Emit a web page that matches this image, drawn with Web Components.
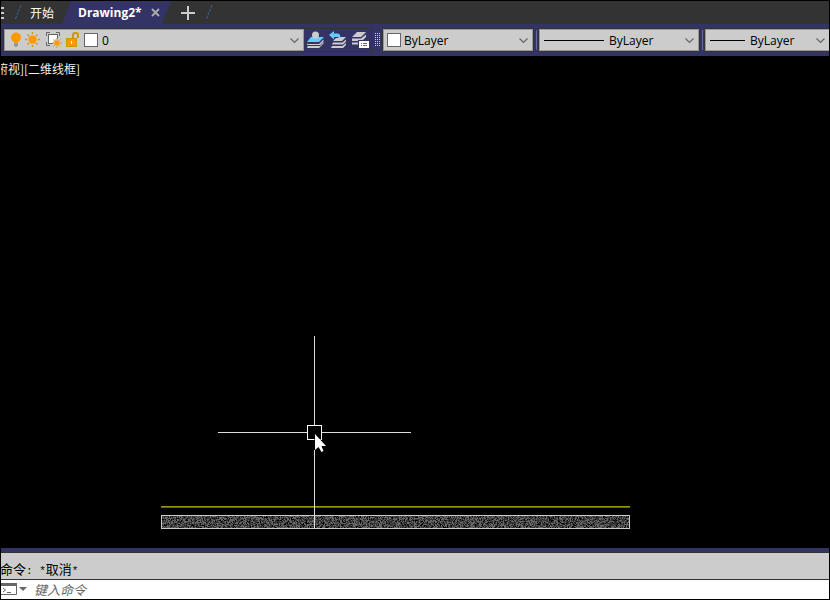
<!DOCTYPE html>
<html lang="zh-CN">
<head>
<meta charset="utf-8">
<title>Drawing2</title>
<style>
body { margin: 0; background: #000; font-family: "Open Sans", "Noto Sans CJK SC", sans-serif; font-size: 12px; }
</style>
</head>
<body>
<cad-app></cad-app>
<script>
const define = (name, html, setup) => {
  const tpl = document.createElement('template');
  tpl.innerHTML = html;
  customElements.define(name, class extends HTMLElement {
    constructor() {
      super();
      this.attachShadow({ mode: 'open' }).append(tpl.content.cloneNode(true));
    }
    connectedCallback() { if (setup) setup(this, this.shadowRoot); }
  });
};

define('tab-divider', `
<style>:host { display: block; width: 8px; height: 17px; } svg { display: block; }</style>
<svg width="8" height="17"><path d="M7 1L1 16" stroke="#336699" stroke-width="1" stroke-dasharray="3 1" fill="none"/></svg>`);

define('file-tabs', `
<style>
:host { display: flex; align-items: center; height: 23px; background: #333; color: #fff; overflow: hidden; }
button { border: 0; padding: 0; background: none; color: inherit; font: inherit; display: flex; align-items: center; }
svg { display: block; }
.menu { width: 4px; margin-right: 9px; }
.start { margin: 0 8px; height: 23px; }
.active { display: flex; align-items: center; box-sizing: border-box; width: 109px; height: 23px; padding-left: 16px; gap: 9px;
  background: #336; clip-path: polygon(9px 0, 100% 0, calc(100% - 9px) 100%, 0 100%); }
.active .name { font-weight: 700; }
.add { margin: 0 9px; }
</style>
<button class="menu" aria-label="菜单"><svg width="4" height="14" fill="#ccc"><path d="M0 1h3v2H0zM0 6h3v2H0zM0 11h3v2H0z"/></svg></button>
<tab-divider></tab-divider>
<button class="start">开始</button>
<div class="active">
  <button class="name">Drawing2*</button>
  <button aria-label="关闭"><svg width="9" height="9"><path d="M1 1l7 7M8 1L1 8" stroke="#aaa" stroke-width="2"/></svg></button>
</div>
<button class="add" aria-label="新建"><svg width="16" height="16"><path d="M8 1v14M1 8h14" stroke="#ccc" stroke-width="2"/></svg></button>
<tab-divider></tab-divider>`);

define('combo-box', `
<style>
:host { display: flex; align-items: center; box-sizing: border-box; height: 22px; border: 1px solid #999; background: #ccc; position: relative; color: #000; }
select { flex: 1; min-width: 0; height: 20px; appearance: none; border: 0; margin: 0; padding: 0 18px 0 var(--text-gap, 5px); background: transparent; color: inherit; font: inherit; border-radius: 0; }
.arrow { position: absolute; right: 4px; top: 8px; pointer-events: none; }
</style>
<slot></slot>
<select><option></option></select>
<svg class="arrow" width="9" height="6"><path d="M.5 .5l4 4l4-4" stroke="#666" stroke-width="1.2" fill="none"/></svg>`,
(host, root) => {
  root.querySelector('option').textContent = host.getAttribute('value');
  root.querySelector('select').setAttribute('aria-label', host.getAttribute('label'));
});

define('color-swatch', `
<style>:host { display: block; box-sizing: border-box; width: 14px; height: 14px; border: 1px solid #666; background: #fff; }</style>`);

define('line-sample', `
<style>:host { display: block; height: 1px; background: #000; }</style>`);

define('layer-states', `
<style>
:host { display: flex; align-items: center; }
button { border: 0; padding: 0; background: none; }
svg { display: block; }
</style>
<button aria-label="开/关图层"><svg width="17" height="18"><circle cx="8" cy="6.500" r="5" fill="#f90"/><path d="M6 10h4v2H6z" fill="#f90"/><path d="M6 12h4v3H9v1H7v-1H6z" fill="#999"/></svg></button>
<button aria-label="冻结"><svg width="17" height="18"><circle cx="7.5" cy="8.5" r="4.2" fill="#f90"/><path d="M7.5 1v2M7.5 14v2M0 8.5h2M13 8.5h2M2.5 3.5l1.500 1.500M11 12l1.500 1.500M12.500 3.500L11 5M4 12l-1.500 1.500" stroke="#c90" stroke-width="1.3"/></svg></button>
<button aria-label="视口冻结"><svg width="20" height="18"><rect x="6.500" y="3.500" width="9" height="9" fill="#fff" stroke="#666"/><path d="M4.500 5V1.500H8M14 1.500h3.500V5M4.500 11v3.500H8" stroke="#666" fill="none"/><circle cx="15" cy="12" r="4" fill="#ccc"/><circle cx="15" cy="12" r="2.700" fill="#f90"/><path d="M15 7v1.500M15 15.500V17M10 12h1.500M18.500 12H20M11.500 8.500l1 1M17.500 14.500l1 1M18.500 8.500l-1 1M12.500 14.500l-1 1" stroke="#c90"/></svg></button>
<button aria-label="锁定"><svg width="24" height="18"><path d="M11 8V4q0-2 2-2h1q2 0 2 2V7" fill="none" stroke="#c90" stroke-width="2"/><path d="M4 7h11v9H4z" fill="#c90"/><path d="M5 8h9v7H5z" fill="#f90"/><path d="M9 10h1v3H9z" fill="#fff"/></svg></button>`);

define('layer-tools', `
<style>
:host { display: flex; align-items: center; gap: 5px; padding: 0 1px 0 2px; }
button { border: 0; padding: 0; background: none; }
svg { display: block; }
</style>
<button aria-label="置为当前"><svg width="18" height="18"><path d="M5 6h13l-5 5H1z" fill="#6cf"/><path d="M2 11.500L1 13h12l4.500-4.500v2L14 14H1zM2 14.500L1 17h12l4.500-4.500v-1.500L14 15H2z" fill="#ccc"/><circle cx="9.500" cy="4" r="3.500" fill="#ccc"/></svg></button>
<button aria-label="上一个图层"><svg width="18" height="18"><path d="M10 6h7l-4 4H4l3-3h3z" fill="#ccc"/><path d="M4 11.500h9.500L17 8.500v2L14 13.500H3zM3 15h10.500l3.500-3v2L14 17H2z" fill="#ccc"/><path d="M0 4l5-4v2.500h3.500q3 0 3 5L8.500 6H5v2.500z" fill="#6cf"/></svg></button>
<button aria-label="图层特性"><svg width="18" height="18"><path d="M5 1h9l-5 5H0zM0 7.500h9L14 3.500v2.500L10 10H0zM0 11.500h7v2H0z" fill="#ccc"/><rect x="6" y="9" width="11" height="8" fill="#336"/><path d="M7 10h10v7H7z" fill="#fff"/><path d="M9 12.500h1M11 12.500h4M9 14.500h1M11 14.500h4" stroke="#666"/></svg></button>`);

define('tool-ribbon', `
<style>
:host { display: flex; padding: 4px 0 4px 2px; background: #336; overflow: hidden; }
.panel { display: flex; border: 1px solid #333; flex: none; }
.layers { width: 300px; --text-gap: 4px; }
.color { width: 150px; --text-gap: 3px; }
.linetype { width: 160px; }
.last { flex: 1 1 90px; min-width: 90px; border-right: 0; }
.last combo-box { flex: 1; border-right: 0; }
.grip { width: 5px; margin: 5px 2px 5px 3px; background: conic-gradient(from 270deg at 1px 1px, #ccd 90deg, transparent 0) 0 0 / 2px 2px; }
.bar { width: 1px; margin: 2px 1px 2px 2px; background: #669; }
.layers layer-states { padding-left: 3px; }
.layers color-swatch { margin-left: -2px; }
.color color-swatch { margin-left: 3px; }
.linetype line-sample { width: 60px; margin-left: 4px; }
.last line-sample { width: 35px; margin-left: 4px; }
</style>
<div class="panel">
  <combo-box class="layers" label="图层" value="0"><layer-states></layer-states><color-swatch></color-swatch></combo-box>
  <layer-tools></layer-tools>
</div>
<div class="grip"></div>
<div class="panel"><combo-box class="color" label="颜色" value="ByLayer"><color-swatch></color-swatch></combo-box></div>
<div class="bar"></div>
<div class="panel"><combo-box class="linetype" label="线型" value="ByLayer"><line-sample></line-sample></combo-box></div>
<div class="bar"></div>
<div class="panel last"><combo-box label="线宽" value="ByLayer"><line-sample></line-sample></combo-box></div>`);

define('hatched-wall', `
<style>
:host { display: block; box-sizing: border-box; height: 14px; border: 1px solid #ccc; background: #333; }
svg { display: block; width: 100%; height: 100%; }
</style>
<svg shape-rendering="crispEdges"><path class="light" fill="#666"/><path class="dark" fill="#000"/></svg>`,
(host, root) => {
  let seed = 77, light = '', dark = '';
  for (let y = 0; y < 12; y++) for (let x = 0; x < 470; x++) {
    seed = (seed * 1103515245 + 12345) % 2147483648;
    const v = seed / 2147483648;
    if (v < .4) light += `M${x} ${y}h1v1h-1z`;
    else if (v > .88) dark += `M${x} ${y}h1v1h-1z`;
  }
  root.querySelector('.light').setAttribute('d', light);
  root.querySelector('.dark').setAttribute('d', dark);
});

define('drawing-view', `
<style>
:host { display: block; position: relative; background: #000; color: #eee; overflow: hidden; }
nav { display: flex; margin: 4px 0 0 -5px; }
nav button { border: 0; padding: 0; background: none; color: inherit; font: 12px/18px "Noto Sans CJK SC", sans-serif; white-space: nowrap; }
.line { position: absolute; left: 160px; top: 450px; width: 469px; height: 2px; background: linear-gradient(#990 50%, #660 50%); }
hatched-wall { position: absolute; left: 160px; top: 459px; width: 469px; }
.cursor { position: absolute; left: 217px; top: 280px; }
</style>
<nav><button>俯视]</button><button>[二维线框]</button></nav>
<div class="line"></div>
<hatched-wall></hatched-wall>
<svg class="cursor" width="194" height="194" shape-rendering="crispEdges">
  <path d="M96.500 0v89M96.500 114v79M0 96.500h89M104 96.500h89" stroke="#ddd"/>
  <path d="M89.500 89.500h14v14h-14z" stroke="#fff" fill="none"/>
  <path d="M97 98v16l3.500-3 3 5 2-1-2-5h4.500z" fill="#fff" stroke="#000" stroke-width="1" paint-order="stroke" shape-rendering="auto"/>
</svg>`);

define('command-line', `
<style>
:host { display: block; background: #ccc; border-top: 4px solid #336; color: #000; }
.log { border-top: 1px solid #333; border-bottom: 1px solid #333; height: 26px; overflow: hidden; }
.log p { margin: 6px 0 0 -1px; font: 13px/20px "Noto Sans CJK SC", sans-serif; white-space: pre; }
.log span { font: 11px/20px "Liberation Mono", monospace; }
.entry { display: flex; align-items: center; height: 19px; background: #fff; }
button { border: 0; padding: 0; background: none; }
svg { display: block; }
input { flex: 1; min-width: 0; height: 19px; border: 0; padding: 0; margin-left: 6px; outline: 0; background: none; font: italic 13px/19px "Noto Sans CJK SC", sans-serif; }
input::placeholder { color: #666; opacity: 1; }
</style>
<div class="log"><p>命令<span>: *</span>取消<span>*</span></p></div>
<div class="entry">
  <button aria-label="最近使用的命令"><svg width="27" height="13"><path d="M0 .5h15.500v11H0" fill="#fff" stroke="#666"/><path d="M0 0h16v3H0z" fill="#666"/><path d="M2 5l2.500 2L2 9M6 9.500h4" stroke="#666" fill="none"/><path d="M18 4h8l-4 4z" fill="#666"/></svg></button>
  <input aria-label="命令" placeholder="键入命令">
</div>`);

define('cad-app', `
<style>
:host { display: grid; grid-template-rows: auto auto 1fr auto; grid-template-columns: minmax(0, 1fr); box-sizing: border-box; min-height: 100vh; border: 1px solid #000; }
</style>
<file-tabs></file-tabs>
<tool-ribbon></tool-ribbon>
<drawing-view></drawing-view>
<command-line></command-line>`);
</script>
</body>
</html>
